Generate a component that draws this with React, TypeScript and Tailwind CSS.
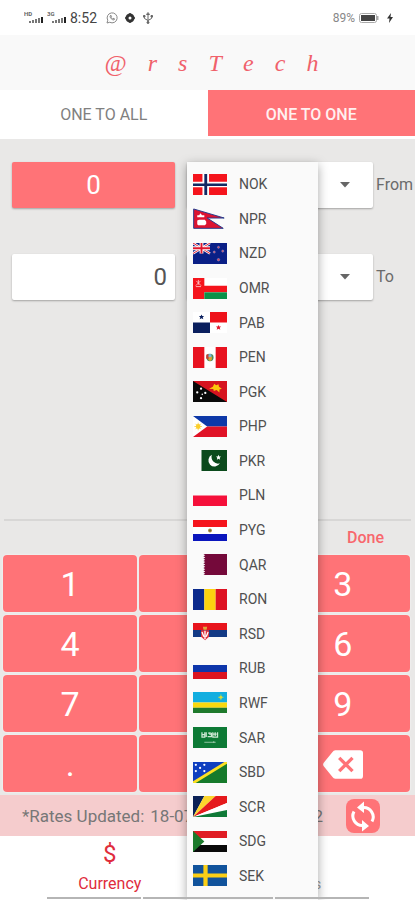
import { useState } from 'react';
import type { ReactNode } from 'react';

interface Currency {
  code: string;
  flag: ReactNode;
}

// All flags are drawn on a 36 x 22 canvas
const currencies: Currency[] = [
  {
    code: 'NOK',
    flag: (
      <>
        <path fill="#f5141c" d="M0 0h36v22H0z" />
        <path fill="#fff" d="M10 0h7v22h-7zM0 8h36v6H0z" />
        <path fill="#122a63" d="M12 0h3v22h-3zM0 10h36v2.500H0z" />
      </>
    ),
  },
  {
    code: 'NPR',
    flag: (
      <>
        <path fill="#dc1431" stroke="#223a8c" strokeWidth="1" d="M.7 1 33 10.500H15L32 21.300H.7z" />
        <path fill="#fff" d="M4.500 7.500h2l1.500-2 1.500 2h2.500v2.200H4.500zM4.500 13l2-.8h6l1.500 2v2.500L12.500 18H5.500L4.500 17z" />
      </>
    ),
  },
  {
    code: 'NZD',
    flag: (
      <>
        <path fill="#0a1f86" d="M0 0h36v22H0z" />
        <path stroke="#fff" strokeWidth="2.600" d="m0 0 18 11M18 0 0 11" />
        <path stroke="#e0162c" strokeWidth="1" d="m0 0 18 11M18 0 0 11" />
        <path fill="#fff" d="M7 0h4v11H7zM0 3.500h18v4H0z" />
        <path fill="#e0162c" d="M8 0h2v11H8zM0 4.500h18v2H0z" />
        <g fill="#e0405a" stroke="#8f9bd0" strokeWidth=".6">
          <circle cx="27" cy="4.500" r="1.100" />
          <circle cx="22.500" cy="9.500" r="1.100" />
          <circle cx="31.500" cy="8.500" r="1.100" />
          <circle cx="27" cy="17.500" r="1.300" />
        </g>
      </>
    ),
  },
  {
    code: 'OMR',
    flag: (
      <>
        <path fill="#fff" d="M0 0h36v8H0z" />
        <path fill="#f5141c" d="M0 0h12v22H0zM12 8h24v7H12z" />
        <path fill="#0a9249" d="M12 15h24v7H12z" />
        <path stroke="#ffc9c9" strokeWidth=".9" d="m3 8 5-5M8.500 8l-5-5M5.700 2v5M3 9h5.500" />
      </>
    ),
  },
  {
    code: 'PAB',
    flag: (
      <>
        <path fill="#fff" d="M0 0h36v22H0z" />
        <path fill="#ee1119" d="M18 0h18v11H18z" />
        <path fill="#0a1f5e" d="M0 11h18v11H0zM9 2.500l.8 1.800h2l-1.500 1.300.6 2L9 6.500l-1.900 1.100.6-2-1.500-1.300h2z" />
        <path fill="#e0162c" d="m27 13.500.8 1.800h2l-1.500 1.300.6 2-1.900-1.100-1.900 1.100.6-2-1.500-1.300h2z" />
      </>
    ),
  },
  {
    code: 'PEN',
    flag: (
      <>
        <path fill="#fff" d="M0 0h36v22H0z" />
        <path fill="#e8121f" d="M0 0h12v22H0zM24 0h12v22H24z" />
        <circle cx="18" cy="11" r="3.800" fill="#4f8d5c" />
        <path fill="#d9a531" d="M16 10h4v3l-2 2-2-2z" />
        <path fill="#c43b35" d="M14 8l2.500-1v6L14 12z" />
        <path fill="#79b8dc" d="M16.500 7.500h3v3h-3z" />
      </>
    ),
  },
  {
    code: 'PGK',
    flag: (
      <>
        <path fill="#0a0a0a" d="M0 0h36v22H0z" />
        <path fill="#d6131f" d="M0 0h36v22z" />
        <path fill="#fbc40c" d="M17 8l4-2 1.500-3 2 1.500L27 3.500l.5 2.500 3 2-2.500 1v3l-3-2.500-3 1-.5-2z" />
        <g fill="#fff">
          <circle cx="8.500" cy="8" r="1.200" />
          <circle cx="4.500" cy="12" r="1.200" />
          <circle cx="13" cy="12.500" r="1.200" />
          <circle cx="9.800" cy="14" r=".8" />
          <circle cx="8.500" cy="18" r="1.200" />
        </g>
      </>
    ),
  },
  {
    code: 'PHP',
    flag: (
      <>
        <path fill="#0d38a8" d="M0 0h36v11H0z" />
        <path fill="#e01226" d="M0 11h36v11H0z" />
        <path fill="#fff" d="m0 0 15 11L0 22z" />
        <circle cx="5.500" cy="11" r="2.500" fill="#fbce2c" />
        <path stroke="#fbce2c" strokeWidth=".8" d="M5.500 7v8M1.500 11h8M2.700 8.200l5.600 5.600M8.300 8.200l-5.600 5.600" />
      </>
    ),
  },
  {
    code: 'PKR',
    flag: (
      <>
        <path fill="#fafafa" d="M0 0h9v22H0z" />
        <path fill="#0b4a1c" d="M9 0h27v22H9z" />
        <path fill="#fff" d="M20 5a6.500 6.500 0 1 0 8.500 9A7 7 0 0 1 20 5z" />
        <path fill="#fff" d="m27 5 .8 1.700 1.900.2-1.400 1.300.4 1.900-1.700-1-1.700 1 .4-1.900-1.400-1.300 1.900-.2z" />
      </>
    ),
  },
  {
    code: 'PLN',
    flag: (
      <>
        <path fill="#fafafa" d="M0 0h36v11H0z" />
        <path fill="#f5103a" d="M0 11h36v11H0z" />
      </>
    ),
  },
  {
    code: 'PYG',
    flag: (
      <>
        <path fill="#f5141c" d="M0 0h36v7.300H0z" />
        <path fill="#fff" d="M0 7.300h36v7.400H0z" />
        <path fill="#0b16bd" d="M0 14.700h36V22H0z" />
        <circle cx="18" cy="11" r="2" fill="#a8843a" />
        <circle cx="18" cy="11" r=".8" fill="#5b6b2e" />
      </>
    ),
  },
  {
    code: 'QAR',
    flag: (
      <>
        <path fill="#fafafa" d="M0 0h13v22H0z" />
        <path fill="#74093a" d="M36 0H11l2 1.200-2 1.200 2 1.200-2 1.300 2 1.200-2 1.200 2 1.200-2 1.300 2 1.200-2 1.200 2 1.200-2 1.300 2 1.200-2 1.200 2 1.200-2 1.300 2 1.200-2 1.200H36z" />
      </>
    ),
  },
  {
    code: 'RON',
    flag: (
      <>
        <path fill="#0b2a8c" d="M0 0h12v22H0z" />
        <path fill="#fcd20f" d="M12 0h12v22H12z" />
        <path fill="#dd1122" d="M24 0h12v22H24z" />
      </>
    ),
  },
  {
    code: 'RSD',
    flag: (
      <>
        <path fill="#e8141c" d="M0 0h36v7.300H0z" />
        <path fill="#123a85" d="M0 7.300h36v7.400H0z" />
        <path fill="#fafafa" d="M0 14.700h36V22H0z" />
        <path fill="#dfa63c" d="M10.500 4h4.500l-.6 3h-3.300z" />
        <path fill="#e0323c" d="M8.500 7.500h8.500v7l-4.200 3.500-4.300-3.500z" />
        <path stroke="#fff" strokeWidth="1.400" d="M12.700 8v9M9.500 9.500l2 5M16 9.500l-2 5" />
      </>
    ),
  },
  {
    code: 'RUB',
    flag: (
      <>
        <path fill="#fafafa" d="M0 0h36v7.300H0z" />
        <path fill="#0d35aa" d="M0 7.300h36v7.400H0z" />
        <path fill="#dc1420" d="M0 14.700h36V22H0z" />
      </>
    ),
  },
  {
    code: 'RWF',
    flag: (
      <>
        <path fill="#12aee0" d="M0 0h36v11H0z" />
        <path fill="#f9d90f" d="M0 11h36v5.500H0z" />
        <path fill="#1f7a2c" d="M0 16.500h36V22H0z" />
        <circle cx="29.500" cy="5.500" r="1.600" fill="#d8dc3a" />
        <path stroke="#d8dc3a" strokeWidth=".7" d="M29.500 2.500v6M26.500 5.500h6" />
      </>
    ),
  },
  {
    code: 'SAR',
    flag: (
      <>
        <path fill="#0d7a35" d="M0 0h36v22H0z" />
        <path stroke="#cfe8d5" strokeWidth="1.300" fill="none" d="M9.500 5.500v5h3v-5M14 5.500v5M15.500 10h4V6M18 5.500v3M21 5.500v5h5v-5M23.500 5.500v4M10 8h2M16 6.500h2M21 7.500h4" />
        <path stroke="#a5d0b1" strokeWidth=".9" d="M12 16h12M22 14.800v2" />
      </>
    ),
  },
  {
    code: 'SBD',
    flag: (
      <>
        <path fill="#0f3fc0" d="M0 0h36L0 22z" />
        <path fill="#167a2b" d="M36 0v22H0z" />
        <path stroke="#fce022" strokeWidth="3" d="M0 22 36 0" />
        <g fill="#fff">
          <circle cx="3" cy="3" r="1.200" />
          <circle cx="12" cy="3" r="1.200" />
          <circle cx="7.500" cy="6.200" r="1.200" />
          <circle cx="3" cy="9.500" r="1.200" />
          <circle cx="12" cy="9.500" r="1.200" />
        </g>
      </>
    ),
  },
  {
    code: 'SCR',
    flag: (
      <>
        <path fill="#0b2156" d="M0 0h12L0 22z" />
        <path fill="#fcd52c" d="M12 0h12L0 22z" />
        <path fill="#e51a1c" d="M24 0h12v7.300L0 22z" />
        <path fill="#fff" d="M36 7.300v7.400L0 22z" />
        <path fill="#0f7a37" d="M36 14.700V22H0z" />
      </>
    ),
  },
  {
    code: 'SDG',
    flag: (
      <>
        <path fill="#e01c24" d="M0 0h36v7.300H0z" />
        <path fill="#fff" d="M0 7.300h36v7.400H0z" />
        <path fill="#0a0a0a" d="M0 14.700h36V22H0z" />
        <path fill="#1c7a2b" d="m0 0 12 11L0 22z" />
      </>
    ),
  },
  {
    code: 'SEK',
    flag: (
      <>
        <path fill="#11539c" d="M0 0h36v22H0z" />
        <path fill="#fbcf16" d="M11 0h4.500v22H11zM0 9h36v4H0z" />
      </>
    ),
  },
];

const keys = ['1', '2', '3', '4', '5', '6', '7', '8', '9', '.', '0', 'back'];

function SignalIcon({ label }: { label: string }) {
  return (
    <svg className="h-[13px] w-5" viewBox="0 0 20 13" aria-hidden="true">
      <text x="0" y="5" fontSize="6" fontWeight="700" fill="#666">
        {label}
      </text>
      <path fill="#777" d="M5 10h2v2H5zM8 9h2v3H8zM11 8h2v4h-2zM14 7h2v5h-2z" />
      <path fill="#222" d="M17 6h2v6h-2z" />
    </svg>
  );
}

function StatusBar() {
  return (
    <div className="flex h-[35px] items-center justify-between bg-white pr-[22px] pl-6 text-[#555]">
      <div className="flex items-center gap-[3px]">
        <SignalIcon label="HD" />
        <SignalIcon label="3G" />
        <span className="text-sm text-[#444]">8:52</span>
        <svg className="ml-[6px] h-3 w-3" viewBox="0 0 24 24" fill="none" stroke="#888" strokeWidth="2" aria-hidden="true">
          <path d="M2 22l1.500-5.500A10 10 0 1 1 7.500 20.500z" />
          <path d="M8 8c0 4 4 8 8 8l1-2.500-3-1-1 1c-1.500-.7-2.500-1.700-3-3l1-1-1-3z" />
        </svg>
        <svg className="ml-1 h-[10px] w-[10px]" viewBox="0 0 20 20" aria-hidden="true">
          <circle cx="10" cy="10" r="6" fill="none" stroke="#333" strokeWidth="6" />
          <path stroke="#333" strokeWidth="3" d="M10 0v4M10 16v4M0 10h4M16 10h4" />
        </svg>
        <svg className="ml-1 h-3 w-3" viewBox="0 0 24 24" fill="none" stroke="#666" strokeWidth="2" aria-hidden="true">
          <path d="M12 3v18M4 9l1 4 7 4 7-4 1-4M9 5l3-4 3 4z" />
          <circle cx="12" cy="21" r="2" fill="#666" />
          <path fill="#666" d="M3 7h3v3H3zM18 7h3v3h-3z" />
        </svg>
      </div>
      <div className="flex items-center gap-1">
        <span className="text-xs text-[#888]">89%</span>
        <svg className="h-[10px] w-5" viewBox="0 0 20 10" aria-hidden="true">
          <rect x=".5" y=".5" width="17" height="9" rx="2" fill="none" stroke="#aaa" />
          <rect x="2" y="2" width="14" height="6" fill="#444" />
          <path fill="#aaa" d="M18 3h1.500v4H18z" />
        </svg>
        <svg className="ml-1 h-[10px] w-[6px]" viewBox="0 0 6 10" aria-hidden="true">
          <path fill="#333" d="M4 0 0 5.500h2.500L2 10l4-6H3.500z" />
        </svg>
      </div>
    </div>
  );
}

interface AmountRowProps {
  id: string;
  label: string;
  inputClass: string;
}

function AmountRow({ id, label, inputClass }: AmountRowProps) {
  const [amount, setAmount] = useState('0');

  return (
    <div className="flex items-center">
      <input
        aria-label={`${label} amount`}
        value={amount}
        onChange={(e) => setAmount(e.target.value)}
        className={`h-[46px] w-[163px] rounded-xs px-2 shadow-[0_1px_2px_rgba(0,0,0,0.3)] ${inputClass}`}
      />
      <div className="relative ml-3 flex-1">
        <select
          id={id}
          className="block h-[46px] w-full appearance-none rounded-xs bg-white px-2 text-sm shadow-[0_1px_2px_rgba(0,0,0,0.3)]"
        >
          {currencies.map((currency) => (
            <option key={currency.code}>{currency.code}</option>
          ))}
        </select>
        <svg className="pointer-events-none absolute top-5 right-[23px] h-[6px] w-[10px]" viewBox="0 0 10 6" aria-hidden="true">
          <path fill="#666" d="M0 0h10L5 5.500z" />
        </svg>
      </div>
      <label htmlFor={id} className="ml-[3px] w-[39px] text-base text-[#6b6b6b]">
        {label}
      </label>
    </div>
  );
}

function CurrencyMenu() {
  return (
    <ul
      role="listbox"
      aria-label="Currencies"
      className="absolute top-[23px] bottom-0 left-[187px] flex w-[131px] flex-col bg-[#fafafa] pt-[5px] pb-[7px] shadow-[0_3px_10px_rgba(0,0,0,0.35)]"
    >
      {currencies.map((currency) => (
        <li key={currency.code} role="option" aria-selected={false} className="flex flex-1 items-center gap-3 px-[6px]">
          <svg className="h-[21px] w-[34px]" viewBox="0 0 36 22" preserveAspectRatio="none" aria-hidden="true">
            {currency.flag}
          </svg>
          <span className="text-sm leading-5 text-[#505050]">{currency.code}</span>
        </li>
      ))}
    </ul>
  );
}

export default function App() {
  return (
    <div className="flex min-h-screen flex-col bg-[#e9e8e7] font-[Roboto,sans-serif]">
      <StatusBar />

      <header className="flex h-[55px] items-center justify-center bg-[#f9f9f9]">
        <h1 className="ml-2 flex w-[214px] justify-between font-['Liberation_Serif',serif] text-2xl text-[#f0616b] italic">
          {['@', 'r', 's', 'T', 'e', 'c', 'h'].map((letter) => (
            <span key={letter}>{letter}</span>
          ))}
        </h1>
      </header>

      <nav className="grid grid-cols-2 bg-white pb-[3px]">
        <button className="h-[46px] pt-[3px] text-base text-[#808080]">ONE TO ALL</button>
        <button className="h-[46px] bg-[#ff7377] pt-[3px] text-base font-medium text-[#fff0f0]">ONE TO ONE</button>
      </nav>

      <div className="relative flex flex-1 flex-col">
        <div className="flex flex-1 flex-col gap-[46px] pt-[23px] pl-3">
          <AmountRow id="from" label="From" inputClass="bg-[#ff7377] text-center text-[26px] text-white" />
          <AmountRow id="to" label="To" inputClass="bg-white text-right text-2xl text-[#555]" />
        </div>

        <div className="mx-1 flex h-[35px] justify-end border-t-2 border-[#d8d7d6] pr-[27px]">
          <button className="text-base font-medium text-[#f8676d]">Done</button>
        </div>

        <div className="grid grid-cols-3 gap-x-[2px] gap-y-[3px] pt-px pr-[5px] pb-[3px] pl-[3px]">
          {keys.map((key) => (
            <button
              key={key}
              aria-label={key === 'back' ? 'Backspace' : undefined}
              className="flex h-[57px] items-center justify-center rounded-sm bg-[#ff7377] pt-[2px] text-[34px] text-white shadow-[0_0_2px_rgba(255,255,255,0.9)]"
            >
              {key === 'back' ? (
                <svg className="h-[31px] w-10" viewBox="0 0 42 32" aria-hidden="true">
                  <path fill="#fff" d="M13 1h26a3 3 0 0 1 3 3v24a3 3 0 0 1-3 3H13a4 4 0 0 1-3-2L1 18a3 3 0 0 1 0-4l9-11a4 4 0 0 1 3-2z" />
                  <path stroke="#ff7377" strokeWidth="3.500" d="m17 9 14 14M31 9 17 23" />
                </svg>
              ) : (
                key
              )}
            </button>
          ))}
        </div>

        <div className="flex h-[41px] items-center justify-between bg-[#f5cccd] pr-[35px] pl-[22px]">
          <p className="flex w-[301px] gap-[6px] pt-[2px] text-[17px] whitespace-nowrap text-[#777]">
            <span>*Rates Updated:</span>
            <span>18-07-2020</span>
            <span className="ml-auto">08:52:12</span>
          </p>
          <button aria-label="Refresh rates" className="h-[34px] w-[34px] rounded-lg bg-[#ff7377]">
            <svg className="h-full w-full" viewBox="0 0 34 34" fill="none" stroke="#fff" strokeWidth="3" aria-hidden="true">
              <path d="M17 8.500a9.500 9.500 0 0 1 9 14M17 26.500a9.500 9.500 0 0 1-9-14" />
              <path fill="#fff" stroke="none" d="M18 2.500v11.500l-7-5.500zM16 21v11.500l7-5.500z" />
            </svg>
          </button>
        </div>

        <div className="bg-white">
          <div className="grid h-[61px] grid-cols-2 px-3">
            <a href="#currency" className="flex flex-col items-center text-[#e02c3c]">
              <span className="text-2xl leading-9">$</span>
              <span className="text-base leading-6">Currency</span>
            </a>
            <a href="#units" className="flex flex-col items-center text-[#999]">
              <span className="text-2xl leading-9">#</span>
              <span className="text-sm leading-6">Units</span>
            </a>
          </div>
          <div className="relative z-10 flex justify-center gap-[2px] pb-px">
            <span className="h-[2px] w-[94px] bg-[#b5b5b5]" />
            <span className="h-[2px] w-[130px] bg-[#b5b5b5]" />
            <span className="h-[2px] w-[94px] bg-[#b5b5b5]" />
          </div>
        </div>

        <CurrencyMenu />
      </div>
    </div>
  );
}
